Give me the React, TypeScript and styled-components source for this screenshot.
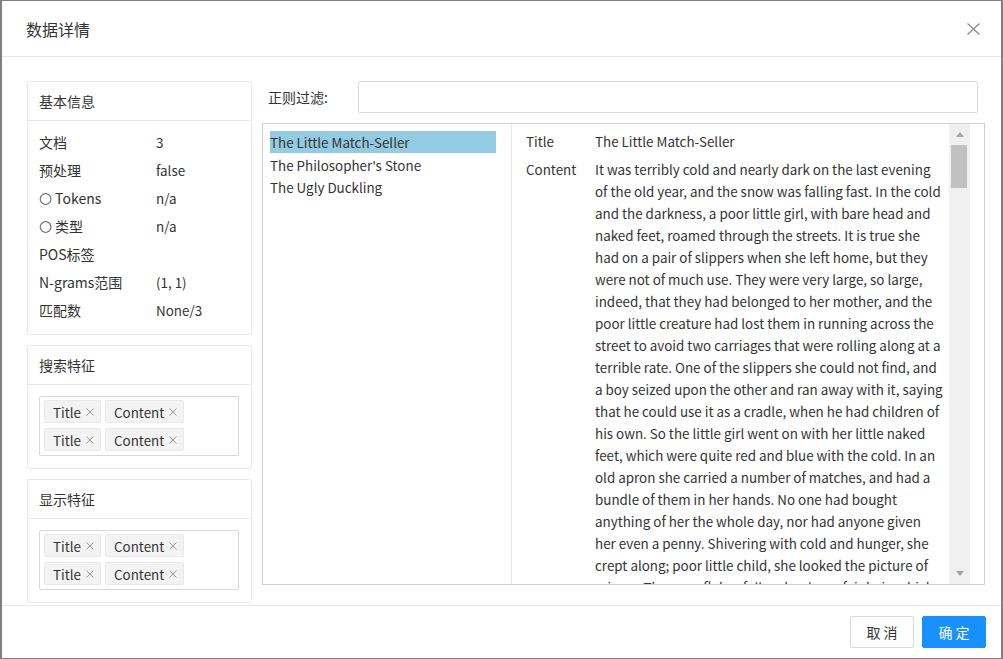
import React from "react";
import styled, { createGlobalStyle } from "styled-components";

const Global = createGlobalStyle`
  html, body { margin: 0; padding: 0; background: #fff; }
  body {
    font-family: "Noto Sans CJK SC", "Noto Sans", sans-serif;
    color: #333;
    font-size: 14px;
  }
  * { box-sizing: border-box; }
`;

const LATIN = "13.4px";

const Window = styled.div`
  width: 1003px;
  height: 659px;
  border-style: solid;
  border-color: #7f7f7f;
  border-width: 1px 2px 1px 2px;
  background: #fff;
  display: flex;
  flex-direction: column;
  overflow: hidden;
`;

const Header = styled.div`
  flex: none;
  height: 56px;
  border-bottom: 1px solid #e8e8e8;
  display: flex;
  align-items: center;
  justify-content: space-between;
  padding: 1px 21px 0 24px;
`;

const Title = styled.div`
  font-size: 16px;
  color: #333;
`;

const CloseBtn = styled.button`
  border: 0;
  background: transparent;
  padding: 0;
  width: 13px;
  height: 12px;
  display: flex;
`;

const Body = styled.div`
  flex: 1;
  min-height: 0;
  overflow: hidden;
  display: flex;
  gap: 10px;
  padding: 24px 16px 0 25px;
`;

const LeftCol = styled.div`
  width: 225px;
  flex: none;
  display: flex;
  flex-direction: column;
  gap: 10px;
`;

const Card = styled.section`
  flex: none;
  border: 1px solid #e8e8e8;
  border-radius: 2px;
`;

const CardHead = styled.div`
  height: 39px;
  border-bottom: 1px solid #e8e8e8;
  padding: 0 11px;
  display: flex;
  align-items: center;
  font-size: 14px;
`;

const InfoBody = styled.div`
  padding: 7px 11px 10px;
`;

const InfoRow = styled.div`
  height: 28px;
  display: grid;
  grid-template-columns: 117px 1fr;
  align-items: center;
  white-space: nowrap;
`;

const Key = styled.span`
  display: flex;
  align-items: center;
`;

const Value = styled.span`
  font-size: ${LATIN};
`;

const Circle = styled.span`
  font-family: "DejaVu Sans", sans-serif;
  font-size: 15px;
  line-height: 1;
  margin-right: 3px;
  color: #444;
`;

const TagBody = styled.div`
  padding: 11px 12px 12px 11px;
`;

const TagBox = styled.div`
  border: 1px solid #d9d9d9;
  border-radius: 2px;
  padding: 3px 4px 4px;
  display: flex;
  flex-direction: column;
  gap: 5px;
`;

const TagRow = styled.div`
  display: flex;
  gap: 4px;
`;

const Tag = styled.span`
  display: inline-flex;
  align-items: center;
  height: 23px;
  padding: 0 6px 0 8px;
  gap: 5px;
  background: #f3f3f3;
  border: 1px solid #e9e9e9;
  border-radius: 2px;
  font-size: ${LATIN};
  color: #333;
`;

const RightCol = styled.div`
  width: 723px;
  flex: none;
  display: flex;
  flex-direction: column;
`;

const FilterRow = styled.div`
  height: 32px;
  display: flex;
  align-items: center;
  padding-left: 6px;
`;

const FilterLabel = styled.label`
  width: 90px;
  flex: none;
  font-size: 14px;
`;

const FilterInput = styled.input`
  width: 620px;
  height: 32px;
  border: 1px solid #d9d9d9;
  border-radius: 2px;
  outline: none;
  padding: 0 8px;
  font: inherit;
`;

const ListBox = styled.div`
  margin-top: 10px;
  height: 462px;
  border: 1px solid #d0d0d0;
  display: flex;
`;

const ListCol = styled.ul`
  margin: 0;
  list-style: none;
  width: 249px;
  flex: none;
  border-right: 1px solid #e8e8e8;
  padding: 7px 15px 0 7px;
`;

const ListItem = styled.li<{ $active?: boolean }>`
  height: 22px;
  line-height: 22px;
  margin-bottom: ${(p) => (p.$active ? "1px" : "0")};
  background: ${(p) => (p.$active ? "#95cae3" : "transparent")};
  color: #333;
  font-size: ${LATIN};
  white-space: nowrap;
`;

const Detail = styled.div`
  flex: 1;
  min-width: 0;
  overflow: hidden;
  padding: 3px 0 0 14px;
  font-size: ${LATIN};
`;

const DetailRow = styled.div`
  display: grid;
  grid-template-columns: 69px 1fr;
  padding: 3px 0;
  line-height: 22px;
`;

const Line = styled.div`
  white-space: nowrap;
`;

const ScrollTrack = styled.div`
  width: 21px;
  flex: none;
  margin-right: 14px;
  background: #f0f0f0;
  display: flex;
  flex-direction: column;
`;

const ArrowBtn = styled.div<{ $down?: boolean }>`
  height: 21px;
  flex: none;
  display: flex;
  align-items: center;
  justify-content: center;
  &::after {
    content: "";
    width: 0;
    height: 0;
    border-left: 4.5px solid transparent;
    border-right: 4.5px solid transparent;
    ${(p) =>
      p.$down
        ? "border-top: 5px solid #a3a3a3;"
        : "border-bottom: 5px solid #a3a3a3;"}
  }
`;

const Thumb = styled.div`
  height: 43px;
  margin: 0 3px 0 2px;
  background: #c1c1c1;
`;

const Spacer = styled.div`
  flex: 1;
`;

const Footer = styled.div`
  flex: none;
  height: 53px;
  border-top: 1px solid #e8e8e8;
  display: flex;
  align-items: center;
  justify-content: flex-end;
  gap: 8px;
  padding: 0 15px;
`;

const Button = styled.button<{ $primary?: boolean }>`
  height: 32px;
  min-width: 64px;
  padding: 0 15px;
  font-family: inherit;
  font-size: 14px;
  border-radius: 2px;
  border: 1px solid ${(p) => (p.$primary ? "#1890ff" : "#d9d9d9")};
  background: ${(p) => (p.$primary ? "#1890ff" : "#fff")};
  color: ${(p) => (p.$primary ? "#fff" : "#333")};
`;

const CloseIcon = () => (
  <svg width="13" height="12" viewBox="0 0 13 12">
    <path d="M0.5 0.5 L12.5 11.5 M12.5 0.5 L0.5 11.5" stroke="#8c8c8c" strokeWidth="1.3" fill="none" />
  </svg>
);

const TagX = () => (
  <svg width="8" height="8" viewBox="0 0 8 8">
    <path d="M0.5 0.5 L7.5 7.5 M7.5 0.5 L0.5 7.5" stroke="#9a9a9a" strokeWidth="1" fill="none" />
  </svg>
);

const info: { k: string; v: string; circle?: boolean }[] = [
  { k: "文档", v: "3" },
  { k: "预处理", v: "false" },
  { k: "Tokens", v: "n/a", circle: true },
  { k: "类型", v: "n/a", circle: true },
  { k: "POS标签", v: "" },
  { k: "N-grams范围", v: "(1, 1)" },
  { k: "匹配数", v: "None/3" },
];

const docs = ["The Little Match-Seller", "The Philosopher's Stone", "The Ugly Duckling"];

const lines = [
  "It was terribly cold and nearly dark on the last evening",
  "of the old year, and the snow was falling fast. In the cold",
  "and the darkness, a poor little girl, with bare head and",
  "naked feet, roamed through the streets. It is true she",
  "had on a pair of slippers when she left home, but they",
  "were not of much use. They were very large, so large,",
  "indeed, that they had belonged to her mother, and the",
  "poor little creature had lost them in running across the",
  "street to avoid two carriages that were rolling along at a",
  "terrible rate. One of the slippers she could not find, and",
  "a boy seized upon the other and ran away with it, saying",
  "that he could use it as a cradle, when he had children of",
  "his own. So the little girl went on with her little naked",
  "feet, which were quite red and blue with the cold. In an",
  "old apron she carried a number of matches, and had a",
  "bundle of them in her hands. No one had bought",
  "anything of her the whole day, nor had anyone given",
  "her even a penny. Shivering with cold and hunger, she",
  "crept along; poor little child, she looked the picture of",
  "misery. The snowflakes fell on her long, fair hair, which",
];

const TagCard = ({ title }: { title: string }) => (
  <Card>
    <CardHead>{title}</CardHead>
    <TagBody>
      <TagBox>
        {[0, 1].map((r) => (
          <TagRow key={r}>
            <Tag>
              Title
              <TagX />
            </Tag>
            <Tag>
              Content
              <TagX />
            </Tag>
          </TagRow>
        ))}
      </TagBox>
    </TagBody>
  </Card>
);

export default function App() {
  return (
    <>
      <Global />
      <Window>
        <Header>
          <Title>数据详情</Title>
          <CloseBtn aria-label="关闭">
            <CloseIcon />
          </CloseBtn>
        </Header>
        <Body>
          <LeftCol>
            <Card>
              <CardHead>基本信息</CardHead>
              <InfoBody>
                {info.map((r) => (
                  <InfoRow key={r.k}>
                    <Key>
                      {r.circle && <Circle>○</Circle>}
                      {r.k}
                    </Key>
                    <Value>{r.v}</Value>
                  </InfoRow>
                ))}
              </InfoBody>
            </Card>
            <TagCard title="搜索特征" />
            <TagCard title="显示特征" />
          </LeftCol>
          <RightCol>
            <FilterRow>
              <FilterLabel>正则过滤:</FilterLabel>
              <FilterInput />
            </FilterRow>
            <ListBox>
              <ListCol>
                {docs.map((d, i) => (
                  <ListItem key={d} $active={i === 0}>
                    {d}
                  </ListItem>
                ))}
              </ListCol>
              <Detail>
                <DetailRow>
                  <span>Title</span>
                  <span>The Little Match-Seller</span>
                </DetailRow>
                <DetailRow>
                  <span>Content</span>
                  <div>
                    {lines.map((l) => (
                      <Line key={l}>{l}</Line>
                    ))}
                  </div>
                </DetailRow>
              </Detail>
              <ScrollTrack>
                <ArrowBtn />
                <Thumb />
                <Spacer />
                <ArrowBtn $down />
              </ScrollTrack>
            </ListBox>
          </RightCol>
        </Body>
        <Footer>
          <Button>取 消</Button>
          <Button $primary>确 定</Button>
        </Footer>
      </Window>
    </>
  );
}
